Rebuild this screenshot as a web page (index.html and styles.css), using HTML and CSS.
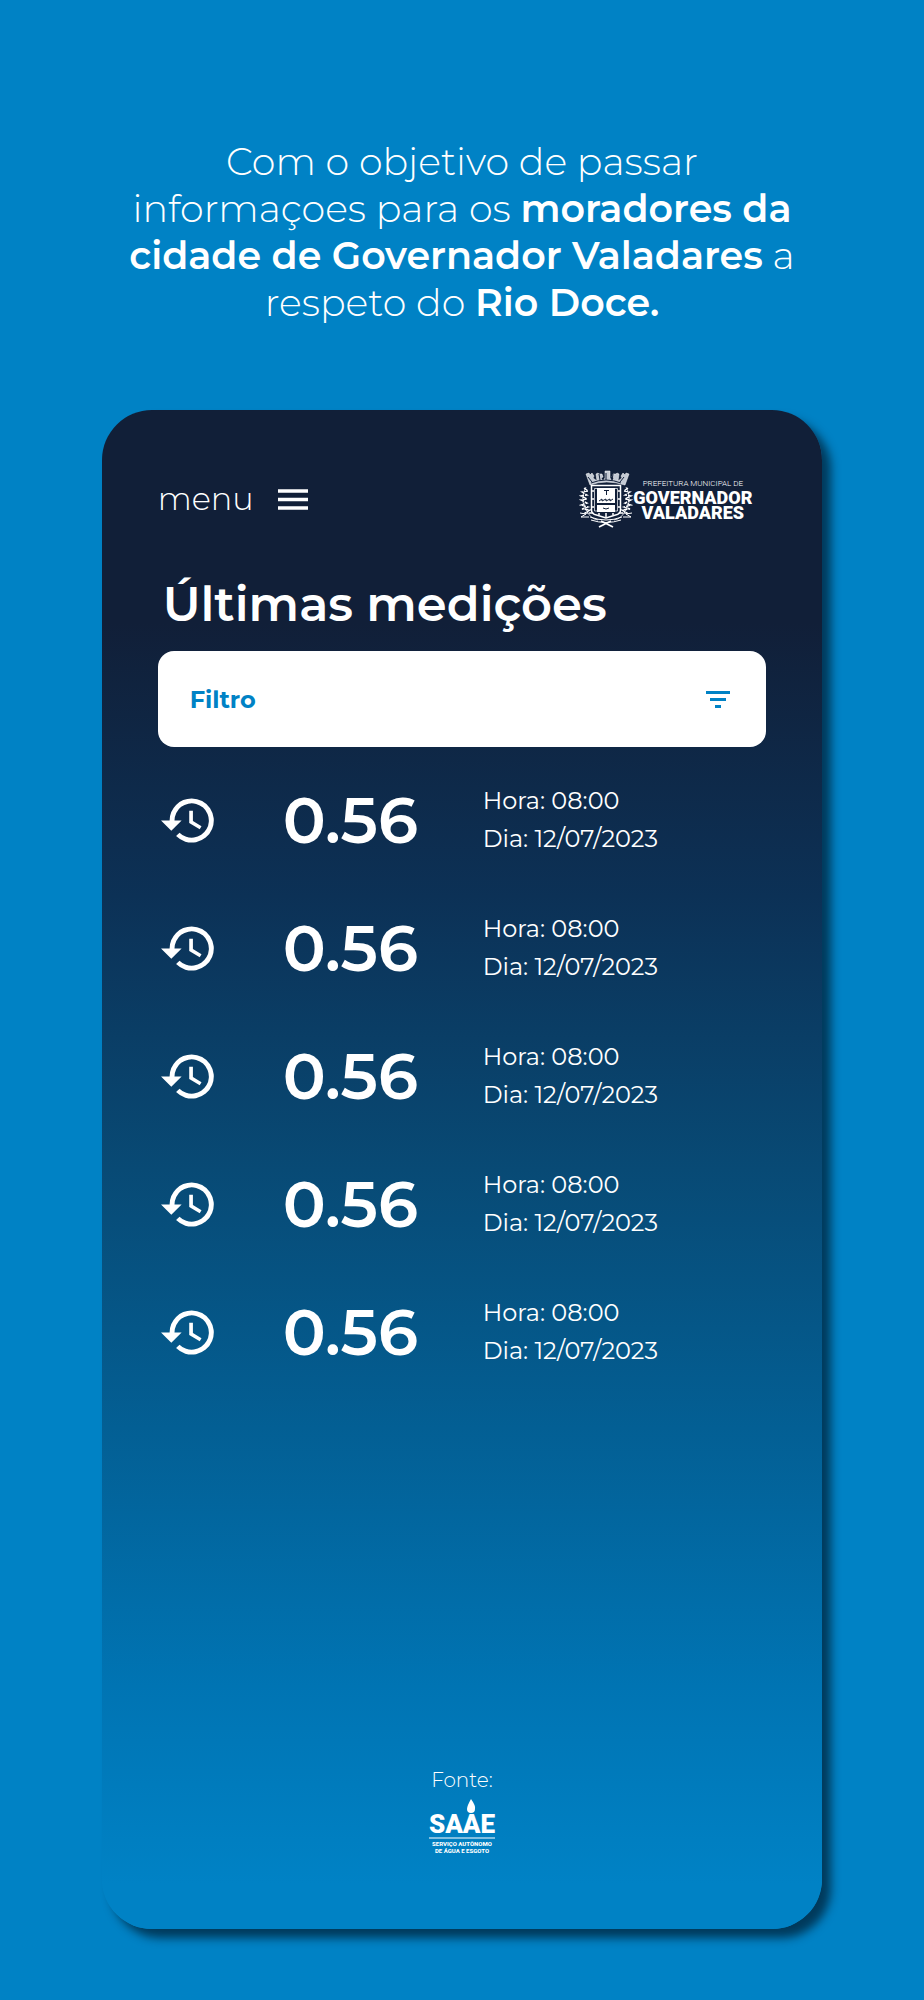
FILE: index.html
```html
<!DOCTYPE html>
<html lang="pt-BR">
<head>
<meta charset="utf-8">
<meta name="viewport" content="width=device-width, initial-scale=1">
<title>Rio Doce - Últimas medições</title>
<link rel="stylesheet" href="styles.css">
</head>
<body>
<svg width="0" height="0" class="defs" aria-hidden="true">
  <symbol id="history" viewBox="1 3 22 18">
    <path d="M13.5 3a9 9 0 0 0-9 9H1l4.200 4.200L9.400 12H6.500a7 7 0 1 1 2.050 4.950L7.140 18.360A9 9 0 1 0 13.500 3zm-1 5v5l4.280 2.540.720-1.210-3.500-2.080V8z" fill="currentColor"/>
  </symbol>
</svg>
<p class="intro">Com o objetivo de passar<br>informaçoes para os <strong>moradores da</strong><br><strong>cidade de Governador Valadares</strong> a<br>respeto do <strong>Rio Doce.</strong></p>
<main class="card">
  <header class="top">
    <button class="menu" type="button">menu
      <svg class="burger" viewBox="0 0 30 21" aria-hidden="true"><path d="M0 2h30M0 10.500h30M0 19h30" stroke="currentColor" stroke-width="3.500"/></svg>
    </button>
    <div class="city">
      <svg class="crest" viewBox="0 0 54 58" fill="none" stroke="#fff" aria-hidden="true">
        <path d="M11 15 7 4l3-1 1 2 2-2 2 3-1 2 4 3-1-7 2-1 1 1h3l1 3-2 1 2 3 2-3V1h5v7l2 3 2-3-2-1 1-3h3l1-1 2 1-1 7 4-3-1-2 2-3 2 2 1-2 3 1-4 11Q27 9 11 15z" fill="#c4cad4" stroke-width=".5"/>
        <path d="M12 13Q27 7 42 13M9 7l4 5M45 7l-4 5M20 4l1 6M34 4l-1 6M27 3v7" stroke="#111f38" stroke-width="1"/>
        <path d="M12.500 15.500h29V40q0 4-5 5l-9.500 3-9.500-3q-5-1-5-5z" stroke-width="1.500"/>
        <path d="M15.500 18.500h23V41h-23z" stroke-width=".7"/>
        <path d="M18 18h18v15H18zM18 35h18v7H18z" fill="#fff" stroke="none"/>
        <path d="M25 20.500h5M27.500 21v4M20 31l3-2v2l4-2v2l4-2v2l3-2M24 38q3 2 6 0" stroke="#111f38" stroke-width="1"/>
        <path d="M12 21h3M39 21h3M12 29h3M39 29h3M12 37h3M39 37h3M20 43v2M27 43v4M34 43v2" stroke-width="1.500"/>
        <path d="M7 17Q1 27 6 38t13 12M47 17q6 10 1 21T35 50" stroke-width=".8"/>
        <path d="m5 18 4 3-6 1 5 3-6 1 6 3-6 1 6 3-6 2 7 2-6 2 8 1-5 3 9 0M49 18l-4 3 6 1-5 3 6 1-6 3 6 1-6 3 6 2-7 2 6 2-8 1 5 3-9 0" stroke-width="1.400" stroke-dasharray="4 1"/>
        <path d="m1 43 6 1-5 3 8 0M53 43l-6 1 5 3-8 0M11 47q16 6 32 0M12 50q15 5 30 0" stroke-width="1"/>
        <path d="m20 57 12-6M34 57l-12-6" stroke-width="1.800"/>
      </svg>
      <div class="city-name"><span class="city-over">PREFEITURA MUNICIPAL DE</span><b>GOVERNADOR<br>VALADARES</b></div>
    </div>
  </header>
  <h1>Últimas medições</h1>
  <button class="filter" type="button">Filtro
    <svg class="filter-icon" viewBox="0 0 24 17" aria-hidden="true"><path d="M0 1.500h24M4 8.500h16M9 15.500h6" stroke="currentColor" stroke-width="2.800"/></svg>
  </button>
  <ul class="list">
    <li><svg class="clock" aria-hidden="true"><use href="#history"/></svg><span class="value">0.56</span><p>Hora: 08:00<br>Dia: 12/07/2023</p></li>
    <li><svg class="clock" aria-hidden="true"><use href="#history"/></svg><span class="value">0.56</span><p>Hora: 08:00<br>Dia: 12/07/2023</p></li>
    <li><svg class="clock" aria-hidden="true"><use href="#history"/></svg><span class="value">0.56</span><p>Hora: 08:00<br>Dia: 12/07/2023</p></li>
    <li><svg class="clock" aria-hidden="true"><use href="#history"/></svg><span class="value">0.56</span><p>Hora: 08:00<br>Dia: 12/07/2023</p></li>
    <li><svg class="clock" aria-hidden="true"><use href="#history"/></svg><span class="value">0.56</span><p>Hora: 08:00<br>Dia: 12/07/2023</p></li>
  </ul>
  <footer class="source">
    <span>Fonte:</span>
    <svg class="saae" viewBox="0 0 66 56" fill="#fff" role="img" aria-label="SAAE, Serviço Autônomo de Água e Esgoto">
      <path d="M42 0q5 7 4 10a4 4 0 0 1-8 0q0-3 4-10z"/>
      <text class="saae-name" x="33" y="34" text-anchor="middle">SAAE</text>
      <path d="M0 38.500h66v1H0z"/>
      <text class="saae-sub" x="33" y="47" text-anchor="middle">SERVIÇO AUTÔNOMO</text>
      <text class="saae-sub" x="33" y="54" text-anchor="middle">DE ÁGUA E ESGOTO</text>
    </svg>
  </footer>
</main>
</body>
</html>
```
FILE: styles.css
```css
* { box-sizing: border-box; }
body {
  margin: 0;
  padding: 138px 11% 71px;
  min-height: 100vh;
  display: flex;
  flex-direction: column;
  background: #0082c5;
  color: #fff;
  font-family: Montserrat, Inter, "Open Sans", sans-serif;
}
.defs { position: absolute; }
p, h1, ul { margin: 0; padding: 0; }
button { border: 0; background: none; font: inherit; color: inherit; cursor: pointer; }
.intro {
  margin-bottom: 84px;
  font-size: 38px;
  line-height: 47px;
  font-weight: 300;
  text-align: center;
}
.intro strong { font-weight: 600; }
.card {
  flex: 1;
  display: flex;
  flex-direction: column;
  padding: 56px 56px 74px;
  border-radius: 50px;
  background: linear-gradient(#111f38 0%, #111f38 14%, #0c3156 32%, #084a75 50%, #035f94 67%, #0074b3 84%, #0082c5 97%);
  box-shadow: 9px 9px 10px rgba(0, 20, 35, .65);
}
.top { display: flex; justify-content: space-between; align-items: center; padding-right: 14px; height: 66px; }
.menu { display: flex; align-items: center; gap: 24px; padding: 0; font-size: 32px; line-height: 40px; font-weight: 300; }
.burger { width: 30px; height: 21px; }
.city { display: flex; align-items: center; }
.crest { width: 54px; height: 58px; }
.city-name { display: flex; flex-direction: column; align-items: center; text-align: center; font-family: Roboto, sans-serif; }
.city-over { font-size: 8px; line-height: 12px; font-weight: 300; }
.city-name b { font-size: 18px; line-height: 15px; font-weight: 900; }
h1 { margin: 42px 0 17px 5px; font-size: 48px; line-height: 60px; font-weight: 600; }
.filter {
  display: flex;
  align-items: center;
  justify-content: space-between;
  height: 96px;
  padding: 0 36px 0 32px;
  border-radius: 16px;
  background: #fff;
  color: #0082c5;
  font-size: 24px;
  font-weight: 700;
}
.filter-icon { width: 24px; height: 17px; }
.list { list-style: none; margin-top: 35px; display: grid; gap: 52px; }
.list li { display: grid; grid-template-columns: 125px 200px 1fr; align-items: center; }
.clock { width: 54px; height: 45px; margin-left: 3px; }
.value { font-size: 64px; line-height: 64px; font-weight: 600; }
.list p { font-size: 24px; line-height: 38px; font-weight: 400; }
.source { margin-top: auto; display: flex; flex-direction: column; align-items: center; gap: 6px; font-size: 20px; line-height: 26px; font-weight: 300; }
.saae { width: 66px; height: 56px; overflow: visible; }
.saae-name { font: 900 26px Roboto, sans-serif; }
.saae-sub { font: 800 6px Roboto, sans-serif; }
```
